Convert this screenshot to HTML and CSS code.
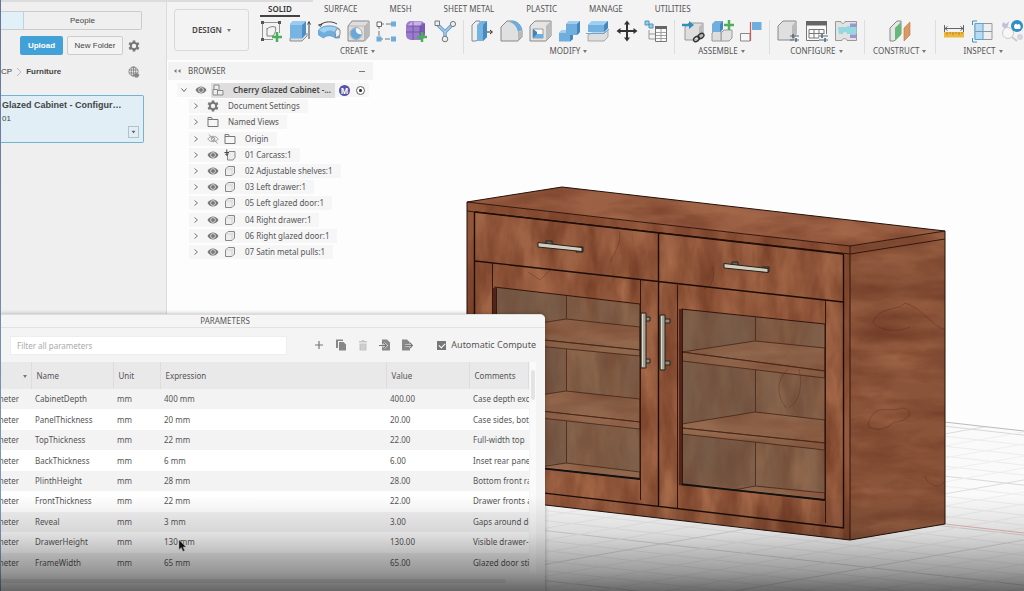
FILE: index.html
```html
<!DOCTYPE html>
<html lang="en">
<head>
<meta charset="utf-8">
<meta name="viewport" content="width=device-width, initial-scale=1">
<title>Cherry Glazed Cabinet</title>
<link rel="stylesheet" href="styles.css">
</head>
<body>
<svg class="defs" aria-hidden="true">
  <symbol id="chev" viewBox="0 0 8 8"><path d="M2.500 1.500 5.500 4 2.500 6.500" fill="none" stroke="#777" stroke-width="1"/></symbol>
  <symbol id="chev-down" viewBox="0 0 8 8"><path d="M1.500 2.500 4 5.500 6.500 2.500" fill="none" stroke="#666" stroke-width="1"/></symbol>
  <symbol id="eye" viewBox="0 0 12 12"><path d="M.5 6C3 1.300 9 1.300 11.500 6 9 10.700 3 10.700.5 6Z" fill="#777"/><circle cx="6" cy="6" r="2.400" fill="#777" stroke="#eee" stroke-width=".8"/></symbol>
  <symbol id="eye-off" viewBox="0 0 12 12"><path d="M.8 6C3 2.400 9 2.400 11.200 6 9 9.600 3 9.600.8 6Z" fill="none" stroke="#999" stroke-width=".9"/><circle cx="6" cy="6" r="1.800" fill="none" stroke="#999" stroke-width=".9"/><path d="M2 1.500 10.500 10.500" stroke="#999"/></symbol>
  <symbol id="gear" viewBox="0 0 12 12"><g stroke="#777" stroke-width="2.600"><path d="M6 .4V11.600M1.200 3.200 10.800 8.800M10.800 3.200 1.200 8.800"/></g><circle cx="6" cy="6" r="4.200" fill="#777"/><circle cx="6" cy="6" r="2.200" fill="#f3f3f3"/></symbol>
  <symbol id="folder" viewBox="0 0 12 12"><path d="M1 10.500V1.500H4.500L5.500 3.500H11V10.500ZM1 3.500H5.500" fill="none" stroke="#777"/></symbol>
  <symbol id="body" viewBox="0 0 12 12"><path d="M1.500 4 4 1.500H10.500V8L8 10.500H1.500Z" fill="#ededed" stroke="#888"/><path d="M1.500 4H8V10.500M8 4 10.500 1.500" fill="none" stroke="#ccc" stroke-width=".7"/></symbol>
  <symbol id="body-ground" viewBox="0 0 12 12"><path d="M3.500 5 5 2.500H11V8.500L9 11H3.500Z" fill="#ededed" stroke="#888"/><path d="M.5 3.500H5M2.800 .5V6M1.300 4.800 2.800 6.500 4.300 4.800" fill="none" stroke="#444"/></symbol>
  <symbol id="assembly" viewBox="0 0 12 12"><path d="M1 5.500H5.500V11H1ZM5.500 6.500H11V11H5.500ZM2 5.500V1H7V6.500" fill="#ededed" stroke="#888"/></symbol>
  <symbol id="plus" viewBox="0 0 8 8"><path d="M3 0H5V3H8V5H5V8H3V5H0V3H3Z" fill="#4aae5b"/></symbol>
  <symbol id="swap" viewBox="0 0 9 8"><path d="M0 2H9M0 6H9" stroke="#5b6f7c" stroke-width="1.200"/><path d="M3 0V4M6 4V8" stroke="#5b6f7c" stroke-width="1.600"/></symbol>
</svg>

<div class="app">
  <aside class="data-panel">
    <nav class="segments" aria-label="Data panel">
      <button class="segment active" aria-label="Data"></button>
      <button class="segment people">People</button>
    </nav>
    <div class="actions">
      <button class="upload">Upload</button>
      <button class="new-folder">New Folder</button>
      <button class="plain gear-button" aria-label="Settings"><svg class="ic12"><use href="#gear"/></svg></button>
    </div>
    <div class="crumbs">
      <a href="#cp">CP</a>
      <svg class="crumb-sep" viewBox="0 0 6 10"><path d="M1 1 5 5 1 9" fill="none" stroke="#bbb"/></svg>
      <a class="current" href="#furniture">Furniture</a>
      <button class="plain web" aria-label="Open on the web"><svg class="ic12" viewBox="0 0 12 12"><g fill="none" stroke="#858585" stroke-width=".9"><circle cx="5.500" cy="5.500" r="4.600"/><ellipse cx="5.500" cy="5.500" rx="2.200" ry="4.600"/><path d="M1 4H10M1 7H10M5.500 1V10"/></g><path d="M6 8.500 8 7 11.500 8.500 10 11.500H7Z" fill="#858585"/></svg></button>
    </div>
    <article class="design-card">
      <h2>Glazed Cabinet - Configur…</h2>
      <p>01</p>
      <button class="version" aria-label="Versions"><svg viewBox="0 0 6 5"><path d="M.5 1H5.500L3 4.500Z" fill="#666"/></svg></button>
    </article>
  </aside>

  <main class="workspace">
    <header class="ribbon">
      <div class="doc-strip"></div>
      <button class="design">DESIGN <span class="caret"></span></button>
      <div class="ribbon-main">
        <nav class="tabs">
          <a class="on" href="#solid">SOLID</a><a href="#surface">SURFACE</a><a href="#mesh">MESH</a><a href="#sheet">SHEET METAL</a><a href="#plastic">PLASTIC</a><a href="#manage">MANAGE</a><a href="#utilities">UTILITIES</a>
        </nav>
        <div class="groups">
          <section class="group">
            <div class="tools">
              <button aria-label="Create sketch"><svg viewBox="0 0 24 24"><path d="M3.500 3.500H20.500V14M3.500 3.500V20.500H14" fill="none" stroke="#888" stroke-width=".9"/><g fill="#555"><path d="M2 2H5V5H2ZM19 2H22V5H19ZM2 19H5V22H2Z"/></g><path d="M8 17V9M8 17H14C16.500 14 17 11 16.500 8 13 7 10 8 8 10" fill="none" stroke="#777" stroke-width=".9"/><use href="#plus" x="13" y="13" width="10" height="10"/></svg></button>
              <button aria-label="Extrude"><svg viewBox="0 0 24 24"><path d="M2 19V22H14L19 17V14" fill="#ddd" stroke="#777" stroke-width=".8"/><path d="M2 5 5 2H18V15L14 19.500H2Z" fill="#78b4e2"/><path d="M14 6 18 2V15L14 19.500Z" fill="#4d8ec6"/><path d="M2 5 5 2H18L14 6H2Z" fill="#9bcbf0"/><path d="M21 20V3M19.500 5.500 21 2.500 22.500 5.500" fill="none" stroke="#444" stroke-width="1"/></svg></button>
              <button aria-label="Revolve"><svg viewBox="0 0 24 24"><path d="M3 6C8 2 15 2 20 5M1.500 6 5 5 3.500 7.500Z" fill="none" stroke="#444"/><path d="M1.500 11C6 5.500 17 5.500 22.500 10V19H18C14 16 10 16 6.500 19L1.500 16Z" fill="#6eafe0" stroke="#5a93c0" stroke-width=".7"/><path d="M2 11C7 6.500 17 6.500 22 10L18 13C14 10.500 10 11 7 14Z" fill="#a2d0f1"/><path d="M18 13 20 9.500 23 11V16L19 19Z" fill="#eee" stroke="#777" stroke-width=".8"/></svg></button>
              <button aria-label="Hole"><svg viewBox="0 0 24 24"><path d="M2 7 6 2H23V17L18.500 22H2Z" fill="#dedede" stroke="#888"/><path d="M18.500 7 23 2V17L18.500 22Z" fill="#b9b9b9"/><path d="M2 7H18.500V22" fill="none" stroke="#aaa" stroke-width=".7"/><circle cx="10" cy="14.500" r="6" fill="#f4f7f9" stroke="#999" stroke-width=".8"/><path d="M10 9A5.500 5.500 0 1 0 15.500 15C12 16 9 13 10 9Z" fill="#68a8d9"/></svg></button>
              <button aria-label="Pattern"><svg viewBox="0 0 24 24"><path d="M4 5H20M4 5V20H20" fill="none" stroke="#777" stroke-dasharray="5 2"/><path d="M2 3H6.500V7.500H2Z" fill="#fff" stroke="#666"/><g fill="#6dacde"><path d="M16 2.500H21V7.500H16ZM1.500 17.500H6.500V22.500H1.500ZM16 17.500H21V22.500H16Z"/></g></svg></button>
              <button aria-label="Create form"><svg viewBox="0 0 24 24"><rect x="2" y="2" width="19" height="19" rx="5" fill="#9a7bcc"/><path d="M3 7 8 2.500H18L16 7Z" fill="#c9b2e8"/><path d="M16 7 21 4V15L16 20Z" fill="#7c5bb4"/><path d="M3 7H16V20M9 2.500V21M2 13H21" fill="none" stroke="#6c4d9d" stroke-width=".8"/><use href="#plus" x="13" y="13" width="10" height="10"/></svg></button>
              <button aria-label="Automated modeling"><svg viewBox="0 0 24 24"><path d="M4 5 12 13 20 5M12 13V20" fill="none" stroke="#6c9fc8" stroke-width="3.500"/><path d="M4 5 12 13 20 5M12 13V20" fill="none" stroke="#a5cced" stroke-width="1.500"/><path d="M2 2H6.500V6.500H2Z" fill="#eee" stroke="#777"/><circle cx="20" cy="5" r="2.600" fill="#eee" stroke="#777"/><circle cx="12" cy="20" r="2.800" fill="#eee" stroke="#777"/></svg></button>
            </div>
            <button class="group-name">CREATE <span class="caret"></span></button>
          </section>
          <section class="group">
            <div class="tools">
              <button aria-label="Press pull"><svg viewBox="0 0 24 24"><path d="M2 6 6 2H10V19L6 22H2Z" fill="#eee" stroke="#888"/><path d="M7 6 11 2H17V18L13 22H7Z" fill="#77b3e1"/><path d="M13 6 17 2V18L13 22Z" fill="#4989c1"/><path d="M17 13H22M20 11 22.500 13 20 15" fill="none" stroke="#333"/></svg></button>
              <button aria-label="Fillet"><svg viewBox="0 0 24 24"><path d="M2 22V8L8 2H14C20 3 23 8 23 13V18L19 22Z" fill="#e0e0e0" stroke="#888"/><path d="M10 3C15 4 18 8 19 13L23 11C22 6 18 2 13 2Z" fill="#6badde"/><path d="M19 13V22L23 18V12Z" fill="#b8b8b8"/></svg></button>
              <button aria-label="Shell"><svg viewBox="0 0 24 24"><path d="M2 7 7 2H23V17L18 22H2Z" fill="#e4e4e4" stroke="#888"/><path d="M18 7 23 2V17L18 22Z" fill="#bbb"/><path d="M5 10H15V19H5Z" fill="#f8f8f8" stroke="#888" stroke-width=".8"/><path d="M5 10 9 13V19H5Z" fill="#3f83bd"/><path d="M5 19 9 15H15V19Z" fill="#6dafe0"/></svg></button>
              <button aria-label="Combine"><svg viewBox="0 0 24 24"><path d="M2 14 5 11H9V5L12 2H23V13L20 16H16V20L13 22.500H2Z" fill="#70aede"/><path d="M9 5 12 2H23L20 5ZM2 14 5 11H9V14Z" fill="#a0cff2"/><path d="M20 5 23 2V13L20 16ZM13 16H16V20L13 22.500Z" fill="#4586bf"/></svg></button>
              <button aria-label="Split body"><svg viewBox="0 0 24 24"><path d="M2 6 6 2H22V9L18 13H2Z" fill="#73b1e1"/><path d="M2 6 6 2H22L18 6Z" fill="#a0cff2"/><path d="M18 6 22 2V9L18 13Z" fill="#4586bf"/><path d="M2 16 6 14H18L22 11V18L18 22H2Z" fill="#dedede" stroke="#999" stroke-width=".8"/><path d="M0 14.500H18L23 10" fill="none" stroke="#64a7dc"/></svg></button>
              <button aria-label="Move"><svg viewBox="0 0 24 24"><path d="M12 3V21M3 12H21" stroke="#333" stroke-width="2"/><path d="M12 1.500 15 5.500H9ZM12 22.500 9 18.500H15ZM1.500 12 5.500 9V15ZM22.500 12 18.500 9V15Z" fill="#333"/></svg></button>
              <button aria-label="Parameters"><svg viewBox="0 0 24 24"><path d="M1 2H5V6H1ZM5 5H9V9H5Z" fill="#9ecbea" stroke="#5395bd"/><path d="M5 11V20H11M5 15H11" fill="none" stroke="#999"/><path d="M11.500 7.500H22.500V22.500H11.500Z" fill="#fafafa" stroke="#777"/><path d="M11 7H23V10H11Z" fill="#666"/><path d="M12 13.500H22M12 16.500H22M12 19.500H22M17 10V22" stroke="#999" stroke-width=".9"/></svg></button>
            </div>
            <button class="group-name">MODIFY <span class="caret"></span></button>
          </section>
          <section class="group">
            <div class="tools">
              <button aria-label="Insert component"><svg viewBox="0 0 24 24"><path d="M4 8 8 4H22V16L18 21H4Z" fill="#dedede" stroke="#999"/><path d="M18 8 22 4V16L18 21Z" fill="#bbb"/><path d="M1 6H10" stroke="#338eb9" stroke-width="2.500"/><path d="M8 2 13 6 8 10Z" fill="#338eb9"/><g fill="none" stroke="#333" stroke-width="1.400"><ellipse cx="15.500" cy="20" rx="3.200" ry="2.200" transform="rotate(-35 15.500 20)"/><ellipse cx="20" cy="17" rx="3.200" ry="2.200" transform="rotate(-35 20 17)"/></g></svg></button>
              <button aria-label="New component"><svg viewBox="0 0 24 24"><path d="M11 14 14 11H22V19L19 22H11Z" fill="#e2e2e2" stroke="#999"/><path d="M2 14 4 12H11V22H2Z" fill="#ddd" stroke="#999"/><path d="M2 5 5 2H13V10L10 13H2Z" fill="#70aede"/><path d="M10 5 13 2V10L10 13Z" fill="#4586bf"/><use href="#plus" x="14" y="1" width="10" height="10"/></svg></button>
              <button aria-label="Joint"><svg viewBox="0 0 24 24"><path d="M13 3H22.500V11H13Z" fill="#70aede"/><path d="M1.500 14.500H11V22H1.500Z" fill="#f6f6f6" stroke="#888"/><path d="M11.500 22V3" stroke="#d45555" stroke-width="1.200"/></svg></button>
            </div>
            <button class="group-name">ASSEMBLE <span class="caret"></span></button>
          </section>
          <section class="group">
            <div class="tools">
              <button aria-label="Configure body"><svg viewBox="0 0 24 24"><path d="M2 7 7 2H20V15L17 21H2Z" fill="#dfdfdf" stroke="#888"/><path d="M16 7 20 2V16L16 21Z" fill="#bbb"/><use href="#swap" x="14" y="15" width="9" height="8"/></svg></button>
              <button aria-label="Configuration table"><svg viewBox="0 0 24 24"><path d="M1.500 2.500H21.500V21.500H1.500Z" fill="#fafafa" stroke="#777"/><path d="M1 2H22V6.500H1Z" fill="#666"/><path d="M4 10.500H19V19H4ZM4 14.500H19M9 10V19M14 10V19" fill="none" stroke="#777"/><path d="M14 15H23V23H14Z" fill="#f3f3f3"/><use href="#swap" x="14" y="15" width="9" height="8"/></svg></button>
              <button aria-label="Theme table"><svg viewBox="0 0 24 24"><path d="M1.500 2.500H7C7 5 11 5 11 2.500H22.500V21.500H13C13 19 8 19 8 21.500H1.500Z" fill="#e2e2e2" stroke="#999"/><path d="M4 8H13V7H22.500V15H13C13 12 9 12 9 15H5Z" fill="#93d9df"/><path d="M16 4.500H22.500V8H16ZM16 15.500H22.500V19H16Z" fill="#9b96d3"/></svg></button>
            </div>
            <button class="group-name">CONFIGURE <span class="caret"></span></button>
          </section>
          <section class="group">
            <div class="tools">
              <button aria-label="Offset plane"><svg viewBox="0 0 24 24"><path d="M2 9 9 2H13V15L6 22H2Z" fill="#e7e7e7" stroke="#888"/><path d="M7 9 13 3V16L7 22Z" fill="#62b979"/><path d="M16 9 22 3V16L16 22Z" fill="#dc9963" stroke="#b77b4c" stroke-width=".6"/></svg></button>
            </div>
            <button class="group-name wide">CONSTRUCT <span class="caret"></span></button>
          </section>
          <section class="group">
            <div class="tools">
              <button aria-label="Measure"><svg viewBox="0 0 24 24"><path d="M2.500 6V13M21.500 6V13M3 9.500H21M5.500 7.500 3 9.500 5.500 11.500M18.500 7.500 21 9.500 18.500 11.500" fill="none" stroke="#555" stroke-width=".9"/><path d="M2 13H22V18.500H2Z" fill="#eeb840"/><path d="M5 13V16M8 13V15M11 13V16M14 13V15M17 13V16M20 13V15" stroke="#a67418" stroke-width=".8"/></svg></button>
              <button aria-label="Section analysis"><svg viewBox="0 0 24 24"><path d="M4 4.500H21V20.500H4Z" fill="#efefef" stroke="#999"/><path d="M4 4.500H12V20.500H4Z" fill="#b8dbf3" stroke="#5ea4d0"/><path d="M4 12.500H21" stroke="#7d9cb0"/><path d="M1.500 6V2H6M1.500 19V23H6" fill="none" stroke="#4590bd"/></svg></button>
              <button aria-label="Display component colors"><svg viewBox="0 0 24 24"><path d="M3 3 6 5 9 2 8 7 5 10 2 7Z" fill="#c5bddd"/><circle cx="8" cy="14" r="5.500" fill="#f7f7f7" stroke="#ccc"/><path d="M12 18 17 22" stroke="#ccc" stroke-width="2"/><circle cx="20" cy="18" r="3" fill="#d4d4e4"/><circle cx="17" cy="7" r="6" fill="#2f8ec5"/><path d="M14 8C14 4 17 4 17 6 19 3 22 7 20 10H15Z" fill="#fff"/></svg></button>
            </div>
            <button class="group-name">INSPECT <span class="caret"></span></button>
          </section>
        </div>
      </div>
    </header>

    <div class="viewport">
      <svg class="scene" viewBox="167 60 857 531" preserveAspectRatio="xMaxYMin slice" role="img" aria-label="Cherry cabinet with glazed doors">
        <defs>
          <filter id="grain-front" x="0" y="0" width="100%" height="100%" color-interpolation-filters="sRGB">
            <feTurbulence type="fractalNoise" baseFrequency=".05 .016" numOctaves="4" seed="7" result="n"/>
            <feColorMatrix in="n" values="0 0 0 0 .4  0 0 0 0 .19  0 0 0 0 .11  1.300 0 0 0 -.45"/>
            <feComposite in2="SourceGraphic" operator="in" result="dark"/>
            <feColorMatrix in="n" values="0 0 0 0 .72  0 0 0 0 .48  0 0 0 0 .33  0 1.200 0 0 -.48"/>
            <feComposite in2="SourceGraphic" operator="in" result="light"/>
            <feMerge><feMergeNode in="SourceGraphic"/><feMergeNode in="light"/><feMergeNode in="dark"/></feMerge>
          </filter>
          <filter id="grain-flat" x="0" y="0" width="100%" height="100%" color-interpolation-filters="sRGB">
            <feTurbulence type="fractalNoise" baseFrequency=".014 .05" numOctaves="4" seed="12" result="n"/>
            <feColorMatrix in="n" values="0 0 0 0 .4  0 0 0 0 .19  0 0 0 0 .12  1.200 0 0 0 -.42"/>
            <feComposite in2="SourceGraphic" operator="in" result="dark"/>
            <feColorMatrix in="n" values="0 0 0 0 .7  0 0 0 0 .46  0 0 0 0 .32  0 1.100 0 0 -.45"/>
            <feComposite in2="SourceGraphic" operator="in" result="light"/>
            <feMerge><feMergeNode in="SourceGraphic"/><feMergeNode in="light"/><feMergeNode in="dark"/></feMerge>
          </filter>
          <pattern id="grid-a" width="200" height="50" patternUnits="userSpaceOnUse" patternTransform="translate(0 318) skewY(6.500)"><path d="M0 .5H200" stroke="#d8d8d8"/><path d="M0 10.500H200M0 20.500H200M0 30.500H200M0 40.500H200" stroke="#ececec"/></pattern>
          <pattern id="grid-b" width="200" height="60" patternUnits="userSpaceOnUse" patternTransform="skewY(-10)"><path d="M0 .5H200" stroke="#dcdcdc"/><path d="M0 12.500H200M0 24.500H200M0 36.500H200M0 48.500H200" stroke="#eee"/></pattern>
        </defs>
        <path d="M167 336 1024 431V591H167Z" fill="#fafafa"/>
        <path d="M167 336 1024 431V591H167Z" fill="url(#grid-a)"/>
        <path d="M167 336 1024 431V591H167Z" fill="url(#grid-b)"/>
        <path d="M900 417 1024 431" stroke="#bbb"/>
        <path d="M945 524 1024 533" stroke="#eab9b9"/>

        <g filter="url(#grain-flat)">
          <path d="M467 202 562 187 945 231 850 246Z" fill="#9c6145"/>
          <path d="M850 246 945 231V524L850 540Z" fill="#8a543a"/>
        </g>
        <g filter="url(#grain-front)">
          <path d="M467 202 850 246V540L467 496Z" fill="#985d40"/>
        </g>
        <path d="M467 202V496L474 497V212L850 254V246ZM843 254V538L850 540V254Z" fill="#6e3522" opacity=".3"/>

        <!-- interiors behind the glass -->
        <g filter="url(#grain-front)">
          <path d="M494 287 640 304V479L494 463Z" fill="#7f5e48"/>
          <path d="M681 309 825 324V500L681 485Z" fill="#7f5e48"/>
        </g>
        <path d="M494 287 640 304V479L494 463ZM681 309 825 324V500L681 485Z" fill="#7f614c" opacity=".4"/>
        <path d="M681 309 755 317V486L681 485ZM494 287 566 296V464L494 463Z" fill="#675347" opacity=".3"/>
        <g filter="url(#grain-flat)" fill="#90674d">
          <path d="M496 330 566 319 640 327V356L496 342Z"/>
          <path d="M496 402 566 391 640 399V429L496 413Z"/>
          <path d="M496 474 566 463 640 472V479L496 463Z"/>
          <path d="M682 352 755 341 825 348V378L682 361Z"/>
          <path d="M682 424 755 412 825 420V450L682 434Z"/>
          <path d="M734 490 755 486 825 493V500Z"/>
        </g>
        <g fill="#8a664d" fill-opacity=".3" stroke="#432517" stroke-width=".8">
          <path d="M496 330 566 319 640 327V350L496 335Z"/><path d="M496 335 640 350V356L496 342Z"/>
          <path d="M496 402 566 391 640 399V422L496 406Z"/><path d="M496 406 640 422V429L496 413Z"/>
          <path d="M496 474 566 463 640 472V479L496 463Z"/>
          <path d="M682 352 755 341 825 348V371L682 352Z"/><path d="M682 352 825 371V378L682 361Z"/>
          <path d="M682 424 755 412 825 420V443L682 428Z"/><path d="M682 428 825 443V450L682 434Z"/>
          <path d="M734 490 755 486 825 493V500Z"/>
        </g>
        <path d="M566.500 296V319M566.500 349V391M566.500 421V463M755.500 317V341M755.500 369V412M755.500 442V486" stroke="#4b2c1b" stroke-width=".9"/>

        <!-- panel joints -->
        <g fill="none" stroke="#34160c" stroke-width="1">
          <path d="M467 202 562 187 945 231V524L850 540 467 496Z" stroke="#22110b"/>
          <path d="M467 202 850 246 945 231M850 246V540M467 211 850 254 945 239"/>
          <path d="M492.500 263V478M640.500 280V500M677.500 285V508M825.500 300V523M494 287 640 304V479M681 309 825 324V500"/>
        </g>
        <g fill="none" stroke="#1d0d08" stroke-width="1.400">
          <path d="M474.500 212V488M658.500 233V506M843.500 254V528M475 212 843 254M475 261 843 302M475 485 844 528"/>
          <path d="M494 463 640 479M679 484 825 500" stroke="#111" stroke-width="1.800"/>
        </g>
        <path d="M494.500 288V463M680.500 309V485" stroke="#52251a" stroke-width="3"/>
        <path d="M496.500 288V463M682.500 309V485" stroke="#1d0d08" stroke-width=".8"/>
        <g fill="none" stroke="#4a2113" stroke-width=".7" opacity=".45">
          <path d="M873 322C880 306 898 311 905 303 922 308 932 326 945 330M873 322C881 332 899 332 910 327"/>
          <path d="M868 424C875 401 889 414 902 408 918 411 905 423 894 422 885 432 869 431 868 424M925 476C930 489 943 488 944 481"/>
          <path d="M786 408C774 391 779 378 788 369M799 369C803 386 799 403 789 407M704 289C714 285 715 275 712 266M610 262C617 249 622 240 619 231M528 272 540 280 550 270"/>
        </g>

        <!-- metal pulls -->
        <g fill="#d3cdbd" stroke="#25221d" stroke-width="1">
          <path d="M546 241H552V246H546ZM576 247H583V252H576ZM732 262H738V267H732ZM762 267H769V272H762Z" fill="#6c6259"/>
          <path d="M538 242.500 582 247.500V251.500L538 247ZM724 263.500 768 268.500V272.500L724 268Z"/>
          <path d="M645 317H650V321H645ZM645 359H650V363H645ZM664 319H670V323H664ZM664 361H670V365H664Z" fill="#938b7d"/>
          <path d="M641 313H646V368H641ZM660 315H665V370H660Z" fill="#aaa596"/>
        </g>
        <path d="M642.500 314V367M661.500 316V369" stroke="#ded9ca"/>
      </svg>

      <section class="browser">
        <header class="browser-head">
          <svg class="collapse" viewBox="0 0 8 8"><path d="M3.500 2 1 4 3.500 6ZM7.500 2 5 4 7.500 6Z" fill="#777"/></svg>
          <h2>BROWSER</h2>
          <button class="plain minimize" aria-label="Minimize"></button>
        </header>
        <ul class="tree">
          <li class="root"><svg class="ic8"><use href="#chev-down"/></svg><svg class="ic12"><use href="#eye"/></svg><span class="selected"><svg class="ic12"><use href="#assembly"/></svg><b>Cherry Glazed Cabinet -...</b></span><span class="badge">M</span><input type="radio" checked aria-label="Activate component"></li>
          <li><svg class="ic8"><use href="#chev"/></svg><svg class="ic12"><use href="#gear"/></svg><span>Document Settings</span></li>
          <li><svg class="ic8"><use href="#chev"/></svg><svg class="ic12"><use href="#folder"/></svg><span>Named Views</span></li>
          <li><svg class="ic8"><use href="#chev"/></svg><svg class="ic12"><use href="#eye-off"/></svg><svg class="ic12"><use href="#folder"/></svg><span>Origin</span></li>
          <li><svg class="ic8"><use href="#chev"/></svg><svg class="ic12"><use href="#eye"/></svg><svg class="ic12"><use href="#body-ground"/></svg><span>01 Carcass:1</span></li>
          <li><svg class="ic8"><use href="#chev"/></svg><svg class="ic12"><use href="#eye"/></svg><svg class="ic12"><use href="#body"/></svg><span>02 Adjustable shelves:1</span></li>
          <li><svg class="ic8"><use href="#chev"/></svg><svg class="ic12"><use href="#eye"/></svg><svg class="ic12"><use href="#body"/></svg><span>03 Left drawer:1</span></li>
          <li><svg class="ic8"><use href="#chev"/></svg><svg class="ic12"><use href="#eye"/></svg><svg class="ic12"><use href="#body"/></svg><span>05 Left glazed door:1</span></li>
          <li><svg class="ic8"><use href="#chev"/></svg><svg class="ic12"><use href="#eye"/></svg><svg class="ic12"><use href="#body"/></svg><span>04 Right drawer:1</span></li>
          <li><svg class="ic8"><use href="#chev"/></svg><svg class="ic12"><use href="#eye"/></svg><svg class="ic12"><use href="#body"/></svg><span>06 Right glazed door:1</span></li>
          <li><svg class="ic8"><use href="#chev"/></svg><svg class="ic12"><use href="#eye"/></svg><svg class="ic12"><use href="#body"/></svg><span>07 Satin metal pulls:1</span></li>
        </ul>
      </section>
    </div>
  </main>

  <section class="dialog" role="dialog" aria-labelledby="dialog-title">
    <h2 class="dialog-title" id="dialog-title">PARAMETERS</h2>
    <div class="dialog-tools">
      <input class="filter" type="text" placeholder="Filter all parameters" aria-label="Filter all parameters">
      <div class="dialog-icons">
        <button class="plain" aria-label="Add"><svg class="ic12" viewBox="0 0 12 12"><path d="M6 2V10M2 6H10" stroke="#777" stroke-width="1.200"/></svg></button>
        <button class="plain" aria-label="Copy"><svg class="ic12" viewBox="0 0 12 12"><path d="M1 .5H8V2H3V9H1Z" fill="#888"/><path d="M4 3H8.500L11 5.500V11.500H4Z" fill="#888"/></svg></button>
        <button class="plain" aria-label="Delete" disabled><svg class="ic12" viewBox="0 0 12 12"><path d="M2 2H4.500L5 1H7L7.500 2H10V3.500H2ZM2.500 4.500H9.500V11.500H2.500Z" fill="#c6c6c6"/><path d="M5 5.500V10.500M7 5.500V10.500" stroke="#ddd" stroke-width=".8"/></svg></button>
        <button class="plain" aria-label="Import"><svg class="ic12" viewBox="0 0 12 12"><path d="M3 .5H8L11 3.500V11.500H3Z" fill="#888"/><path d="M0 6.500H7M5 4 7.500 6.500 5 9" fill="none" stroke="#f3f3f3" stroke-width="2.200"/><path d="M0 6.500H7M5 4 7.500 6.500 5 9" fill="none" stroke="#777" stroke-width="1.200"/></svg></button>
        <button class="plain" aria-label="Export"><svg class="ic12" viewBox="0 0 12 12"><path d="M1 .5H6L9 3.500V11.500H1Z" fill="#888"/><path d="M4 6.500H11M9 4 11.500 6.500 9 9" fill="none" stroke="#f3f3f3" stroke-width="2.200"/><path d="M4 6.500H11M9 4 11.500 6.500 9 9" fill="none" stroke="#777" stroke-width="1.200"/></svg></button>
      </div>
      <label class="auto"><input type="checkbox" checked>Automatic Compute</label>
    </div>
    <div class="table-area">
      <div class="table-clip">
        <table>
          <colgroup><col class="c-type"><col class="c-name"><col class="c-unit"><col class="c-expr"><col class="c-value"><col class="c-comment"></colgroup>
          <thead><tr><th aria-label="Parameter"><span class="caret"></span></th><th>Name</th><th>Unit</th><th>Expression</th><th>Value</th><th>Comments</th></tr></thead>
          <tbody>
            <tr><td><div class="clip-left">meter</div></td><td>CabinetDepth</td><td>mm</td><td>400 mm</td><td>400.00</td><td>Case depth exc</td></tr>
            <tr><td><div class="clip-left">meter</div></td><td>PanelThickness</td><td>mm</td><td>20 mm</td><td>20.00</td><td>Case sides, bot</td></tr>
            <tr><td><div class="clip-left">meter</div></td><td>TopThickness</td><td>mm</td><td>22 mm</td><td>22.00</td><td>Full-width top</td></tr>
            <tr><td><div class="clip-left">meter</div></td><td>BackThickness</td><td>mm</td><td>6 mm</td><td>6.00</td><td>Inset rear pane</td></tr>
            <tr><td><div class="clip-left">meter</div></td><td>PlinthHeight</td><td>mm</td><td>28 mm</td><td>28.00</td><td>Bottom front ra</td></tr>
            <tr><td><div class="clip-left">meter</div></td><td>FrontThickness</td><td>mm</td><td>22 mm</td><td>22.00</td><td>Drawer fronts a</td></tr>
            <tr><td><div class="clip-left">meter</div></td><td>Reveal</td><td>mm</td><td>3 mm</td><td>3.00</td><td>Gaps around do</td></tr>
            <tr><td><div class="clip-left">meter</div></td><td>DrawerHeight</td><td>mm</td><td>130 mm</td><td>130.00</td><td>Visible drawer-</td></tr>
            <tr><td><div class="clip-left">meter</div></td><td>FrameWidth</td><td>mm</td><td>65 mm</td><td>65.00</td><td>Glazed door sti</td></tr>
          </tbody>
        </table>
      </div>
      <div class="v-track"><div class="v-thumb"></div></div>
    </div>
    <div class="h-track"><div class="h-thumb"></div></div>
  </section>

  <div class="screen-edge"></div>
  <div class="shade"></div>
  <svg class="pointer" viewBox="0 0 9 13"><path d="M1 1V10.500L3.300 8.500 5 12.300 6.600 11.500 5 7.900H8Z" fill="#111" stroke="#999" stroke-width=".5"/></svg>
</div>
</body>
</html>
```
FILE: styles.css
```css
* { box-sizing: border-box; }
body { margin: 0; font: 8px/12px "Noto Sans", "Open Sans", sans-serif; color: #555; }
h2, p, ul { margin: 0; padding: 0; font-size: inherit; font-weight: inherit; }
button { font: inherit; color: inherit; padding: 0; border: 0; background: none; }
a { color: inherit; text-decoration: none; }
svg { display: block; }
.defs { position: absolute; width: 0; height: 0; }
.ic8 { width: 8px; height: 8px; flex: none; }
.ic12 { width: 12px; height: 12px; flex: none; }
.caret { display: inline-block; border: 2px solid transparent; border-top: 3px solid #777; border-bottom: 0; vertical-align: 1px; margin-left: 1px; }

.app { position: relative; display: flex; height: 100vh; overflow: hidden; background: #fdfdfd; }

/* data panel */
.data-panel { flex: none; width: 167px; padding-top: 9px; background: #efefef; border-top: 2px solid #dcdcdc; border-right: 1px solid #dcdcdc; font-family: "Liberation Sans", sans-serif; color: #444; }
.segments { display: flex; width: 142px; height: 19px; border: 1px solid #cbcbcb; border-left: 0; border-radius: 0 2px 2px 0; }
.segment.active { width: 24px; background: #e2f0f8; border-right: 1px solid #b9d5e4; }
.segment.people { flex: 1; }
.actions { display: flex; align-items: center; gap: 4px; padding: 6px 0 0 20px; }
.upload { width: 43px; height: 19px; border-radius: 2px; background: #42a2d8; color: #fff; font-weight: bold; }
.new-folder { width: 56px; height: 19px; border: 1px solid #cdcdcd; border-radius: 2px; background: #f3f3f3; }
.gear-button { margin-left: 1px; }
.crumbs { display: flex; align-items: center; gap: 4px; height: 34px; padding: 0 26px 0 1px; }
.crumb-sep { width: 6px; height: 10px; }
.crumbs .current { font-weight: bold; }
.web { margin-left: auto; }
.design-card { position: relative; width: 144px; height: 48px; margin-top: 6px; padding: 3px 2px; border: 1px solid #71b5d2; border-left: 0; border-radius: 0 2px 2px 0; background: #e2eef5; line-height: 13px; }
.design-card h2 { font-size: 9px; font-weight: bold; white-space: nowrap; }
.version { position: absolute; right: 4px; bottom: 4px; width: 11px; height: 12px; border: 1px solid #afc2cc; display: grid; place-items: center; }
.version svg { width: 5px; height: 4px; }

/* ribbon */
.workspace { flex: 1; min-width: 0; display: flex; flex-direction: column; }
.ribbon { position: relative; flex: none; display: flex; height: 60px; background: #f3f3f3; overflow: hidden; }
.doc-strip { position: absolute; left: 0; top: 0; width: 146px; height: 2px; background: #dcdcdc; }
.design { flex: none; width: 75px; height: 42px; margin: 9px 3px 0 7px; border: 1px solid #d9d9d9; border-radius: 3px; font-weight: 600; color: #444; }
.design .caret { margin-left: 3px; }
.ribbon-main { flex: none; }
.tabs { display: flex; height: 17px; padding: 3px 0 0 8px; gap: 16px; }
.tabs a { padding: 0 8px; height: 14px; white-space: nowrap; }
.tabs a.on { font-weight: 600; color: #333; border-bottom: 2px solid #444; }
.groups { display: flex; padding-top: 1px; }
.group { flex: none; display: flex; flex-direction: column; align-items: center; padding: 0 4px; }
.group + .group { background: linear-gradient(#ddd, #ddd) left 0 top 2px / 1px 34px no-repeat; }
.tools { display: flex; height: 26px; }
.tools button { width: 29px; display: grid; place-items: center; }
.tools svg { width: 24px; height: 24px; }
.group-name { white-space: nowrap; height: 13px; line-height: 13px; }
.group-name.wide { padding: 0 5px; }

/* viewport */
.viewport { position: relative; flex: 1; min-height: 0; }
.scene { position: absolute; inset: 0; width: 100%; height: 100%; }
.browser { position: relative; width: 206px; padding-top: 2px; }
.browser-head { display: flex; align-items: center; height: 18px; margin-left: 1px; padding: 0 8px 0 5px; background: #f3f3f3; }
.collapse { width: 8px; height: 8px; margin-right: 7px; }
.minimize { width: 6px; height: 6px; margin-left: auto; background: linear-gradient(#777, #777) center / 6px 1px no-repeat; }
.tree { list-style: none; display: grid; grid-template-rows: repeat(11, 1fr); justify-items: start; height: 180px; padding-top: 2px; }
.tree li { display: flex; align-items: center; gap: 5px; margin-left: 22px; padding: 0 8px 0 3px; background: linear-gradient(#f6f6f6, #f6f6f6) center / 100% 14px no-repeat; white-space: nowrap; }
.tree .ic8 { margin-right: 2px; }
.tree li > span { margin-left: 4px; }
.tree li.root { margin-left: 10px; padding-right: 4px; }
.tree .selected { display: flex; align-items: center; gap: 9px; width: 124px; height: 15px; margin-left: -1px; padding-left: 1px; background: #dedede; }
.selected b { font-weight: 600; color: #444; }
.tree .badge { width: 11px; height: 11px; margin-left: -1px; border-radius: 50%; background: #5753a5; color: #fff; font-size: 8px; font-weight: bold; line-height: 11px; text-align: center; }
.root input { appearance: none; width: 9px; height: 9px; margin: 0 0 0 1px; border: 1px solid #666; border-radius: 50%; background: radial-gradient(#333 0 1px, #fafafa 2px); }

/* parameters window */
.dialog { position: absolute; left: 0; top: 314px; width: 545px; bottom: 0; display: flex; flex-direction: column; overflow: hidden; border-radius: 0 5px 0 0; border-top: 1px solid #ddd; background: #f4f4f4; box-shadow: 0 0 4px rgba(0, 0, 0, .3); }
.dialog-title { height: 13px; padding-right: 95px; border-bottom: 1px solid #e2e2e2; line-height: 12px; text-align: center; background: #f5f5f5; }
.dialog-tools { display: flex; align-items: center; height: 34px; padding: 0 9px 0 10px; }
.filter { width: 277px; height: 19px; padding: 0 6px; border: 1px solid #eee; background: #fff; font: inherit; color: #555; }
.filter::placeholder { color: #aaa; opacity: 1; }
.dialog-icons { display: flex; gap: 10px; margin-left: 26px; }
.auto { display: flex; align-items: center; gap: 5px; margin-left: auto; font-size: 9px; white-space: nowrap; }
.auto input { appearance: none; width: 9px; height: 9px; margin: 0; background: #777; display: grid; place-items: center; }
.auto input::after { content: ""; width: 5px; height: 3px; border: solid #fff; border-width: 0 0 1px 1px; transform: rotate(-45deg); }
.table-area { display: flex; }
.table-clip { width: 529px; overflow: hidden; }
table { width: 100%; height: 211px; table-layout: fixed; border-collapse: collapse; }
.c-type { width: 31px; }
.c-name { width: 82px; }
.c-unit { width: 47px; }
.c-expr { width: 226px; }
.c-value { width: 83px; }
th, td { padding: 0 0 0 4px; text-align: left; font-weight: 400; white-space: nowrap; overflow: hidden; }
thead tr { height: 27px; }
th { padding-left: 5px; background: #e9e9e9; border-right: 1px solid #ddd; }
th:first-child { padding-left: 22px; }
td:first-child { padding: 0; }
tbody tr:nth-child(odd) { background: #f3f3f3; }
tbody tr:nth-child(even) { background: #fff; }
.clip-left { display: flex; justify-content: flex-end; width: 19px; overflow: hidden; }
.v-track { width: 6px; margin-left: 1px; background: #fafafa; }
.v-thumb { width: 4px; height: 30px; margin: 8px 0 0 1px; background: #e3e3e3; border-radius: 2px; }
.h-track { padding-top: 6px; }
.h-thumb { width: 506px; height: 4px; background: #e2e2e2; border-radius: 0 2px 2px 0; }

.screen-edge { position: absolute; left: 0; top: 0; bottom: 0; width: 1px; background: linear-gradient(#66739c, #7f9fc2); }
.shade { position: absolute; left: 0; right: 0; bottom: 0; height: 96px; pointer-events: none; background: linear-gradient(rgba(0, 0, 0, 0), rgba(0, 0, 0, .12) 40%, rgba(0, 0, 0, .38) 80%, rgba(0, 0, 0, .58)); }
.pointer { position: absolute; left: 178px; top: 539px; width: 9px; height: 13px; }
```
